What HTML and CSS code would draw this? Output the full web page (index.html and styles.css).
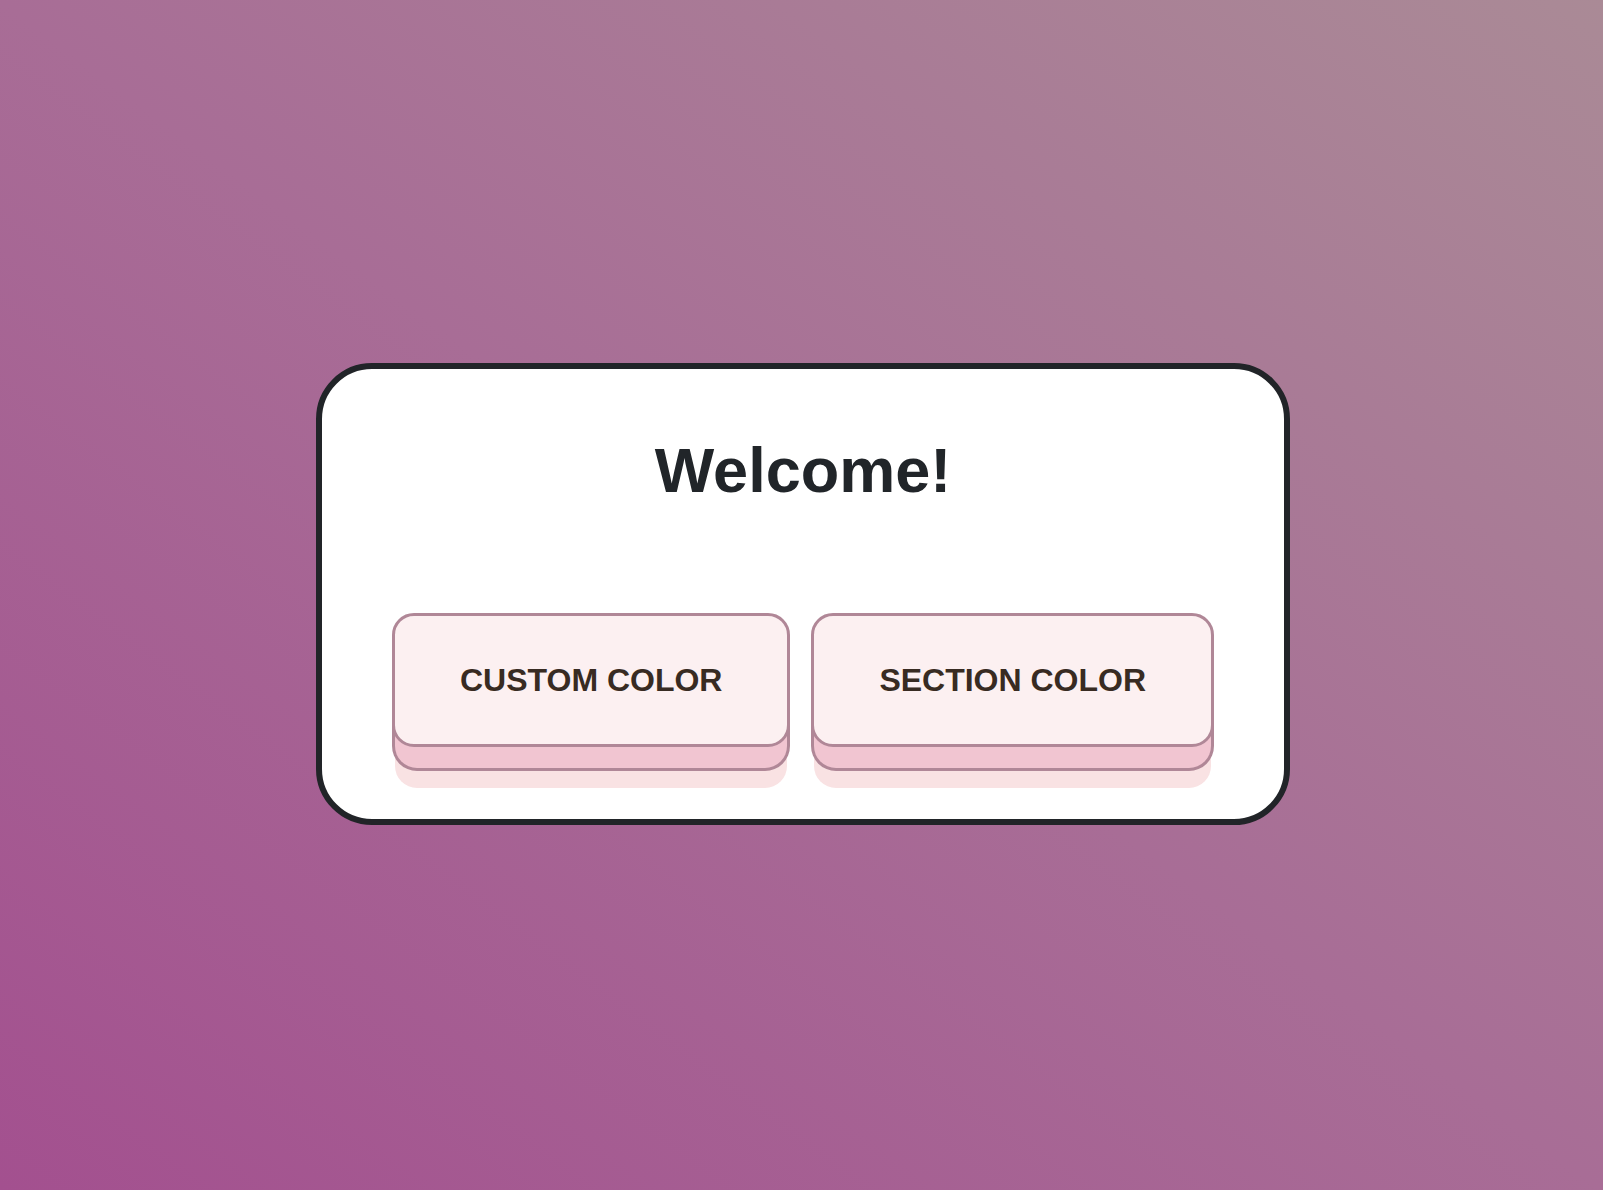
FILE: index.html
```html
<!DOCTYPE html>
<html lang="en">
<head>
<meta charset="utf-8">
<title>Welcome</title>
<link rel="stylesheet" href="styles.css">
</head>
<body>
  <main class="stage">
    <section class="card">
      <h1 class="card-title">Welcome!</h1>
      <div class="actions">
        <button class="pushable" type="button">CUSTOM COLOR</button>
        <button class="pushable" type="button">SECTION COLOR</button>
      </div>
    </section>
  </main>
</body>
</html>
```
FILE: styles.css
```css
* { box-sizing: border-box; }
html, body { height: 100%; }
body {
  margin: 0;
  font-family: "Liberation Sans", Arial, sans-serif;
  background: linear-gradient(to top right, #a3508f 0%, #a86d96 50%, #aa8a96 100%);
}
.stage {
  min-height: 100%;
  display: flex;
  align-items: center;
  justify-content: center;
}
.card {
  width: 974px;
  background: #ffffff;
  border: 6px solid #212428;
  border-radius: 56px;
  padding: 64px 70px 72px;
  margin: -2px 0 0 3px;
}
.card-title {
  margin: 0 0 105px;
  text-align: center;
  font-size: 63px;
  line-height: 1.18;
  font-weight: 700;
  color: #212529;
}
.actions {
  display: flex;
  gap: 21px;
}
.pushable {
  flex: 1 1 auto;
  position: relative;
  transform-style: preserve-3d;
  font-family: "Liberation Sans", Arial, sans-serif;
  font-size: 32px;
  font-weight: 700;
  line-height: 1.5;
  color: #382b22;
  background: #fcf0f1;
  border: 3px solid #b08797;
  border-radius: 22px;
  padding: 40px 64px;
  cursor: pointer;
}
.pushable::before {
  content: "";
  position: absolute;
  inset: 0;
  background: #f1c5d1;
  border-radius: inherit;
  box-shadow: 0 0 0 3px #b08797, 0 20px 0 0 #f9e2e3;
  transform: translate3d(0, 24px, -1px);
}
```
